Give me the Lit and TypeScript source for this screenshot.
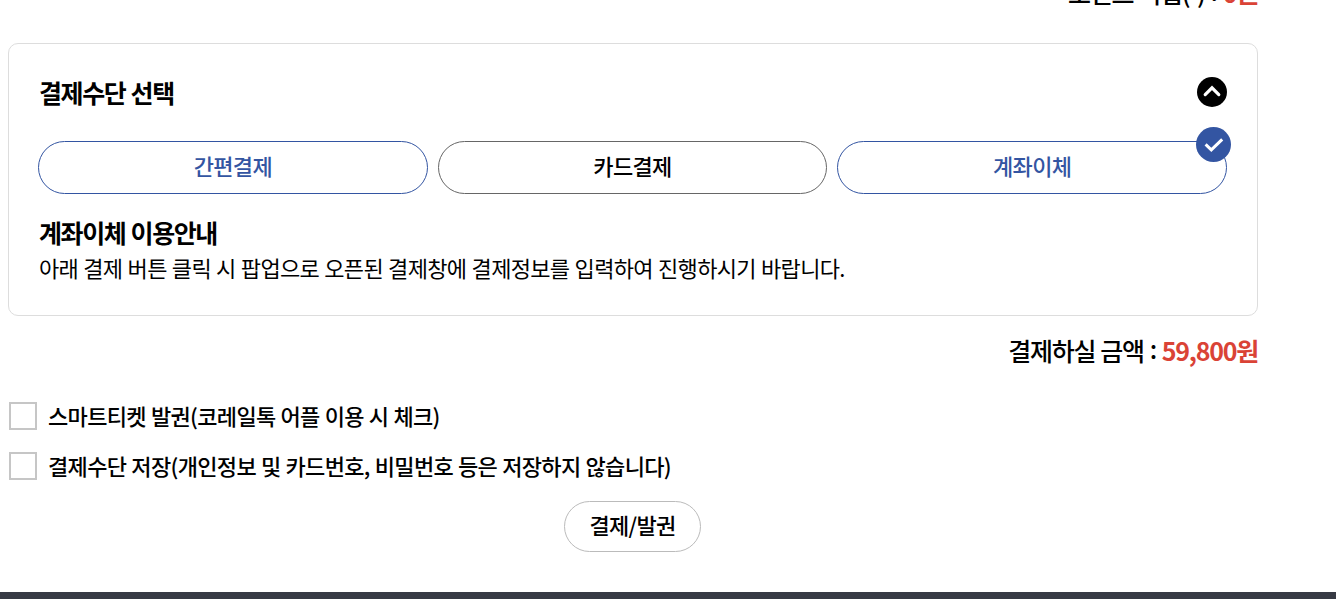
import { LitElement, css, html, svg, nothing } from 'lit'
import { customElement, property, state } from 'lit/decorators.js'

type Method = {
  id: string;
  name: string;
  tone: 'blue' | 'dark';
}

const methods: Method[] = [
  { id: 'easy', name: '간편결제', tone: 'blue' },
  { id: 'card', name: '카드결제', tone: 'dark' },
  { id: 'account', name: '계좌이체', tone: 'blue' },
]

@customElement('amount-line')
export class AmountLine extends LitElement {
  @property()
  public label = '';

  @property()
  public amount = '';

  render() {
    return html`<span>${this.label}</span><span class="colon">:</span><strong>${this.amount}</strong>`
  }

  static styles = css`
:host {
  display: flex;
  justify-content: flex-end;
  height: 36px;
  line-height: 36px;
  font-size: 25px;
  letter-spacing: -1.3px;
  font-weight: 500;
  white-space: pre;
}
.colon {
  margin: -2px 6px 2px 6px;
}
strong {
  font-weight: 700;
  letter-spacing: -1.25px;
  color: #da4336;
}
`
}

@customElement('check-row')
export class CheckRow extends LitElement {
  @property({ type: Boolean })
  public checked = false;

  render() {
    return html`
    <label>
      <input type="checkbox" .checked=${this.checked} @change=${() => { this.checked = !this.checked }}>
      <span><slot></slot></span>
    </label>
    `
  }

  static styles = css`
:host {
  display: block;
}
label {
  display: flex;
  align-items: center;
  gap: 11px;
  height: 32px;
  line-height: 32px;
  font-weight: 500;
  word-spacing: 0.7px;
  white-space: nowrap;
}
span {
  padding-bottom: 2px;
}
input {
  appearance: none;
  box-sizing: border-box;
  width: 28px;
  height: 28px;
  margin: 0;
  border: 2px solid #c6c6c6;
  background: #fff;
}
input:checked {
  background: #3355a2;
}
`
}

@customElement('app-root')
export default class PaymentPage extends LitElement {
  @state()
  private _selected = 'account';

  @state()
  private _open = true;

  private _renderMethod(method: Method) {
    return html`
      <button class="method ${method.tone}" @click=${() => { this._selected = method.id }}>
        ${method.name}
        ${method.id === this._selected ? html`
          <svg class="badge" viewBox="0 0 35 35">${svg`
            <circle cx="17.5" cy="17.5" r="17.5" fill="#3355a2"/>
            <path d="M9.6 17.4 L15.3 22.9 L26.2 12.3" fill="none" stroke="#fff" stroke-width="3"/>`}
          </svg>` : nothing}
      </button>
    `
  }

  render() {
    return html`
    <main>
      <amount-line class="points" label="포인트 적립(-)" amount="0원"></amount-line>
      <section>
        <header>
          <h2>결제수단 선택</h2>
          <button class="toggle" @click=${() => { this._open = !this._open }}>
            <svg width="30" height="30" viewBox="0 0 30 30">
              <circle cx="15" cy="15" r="15"/>
              <path d="M8.2 17.6 L15 10.8 L21.8 17.6" fill="none" stroke="#fff" stroke-width="3.2" stroke-linecap="round"/>
            </svg>
          </button>
        </header>
        ${this._open ? html`
          <div class="methods">${methods.map(method => this._renderMethod(method))}</div>
          <h3>계좌이체 이용안내</h3>
          <p>아래 결제 버튼 클릭 시 팝업으로 오픈된 결제창에 결제정보를 입력하여 진행하시기 바랍니다.</p>
        ` : nothing}
      </section>
      <amount-line class="total" label="결제하실 금액" amount="59,800원"></amount-line>
      <div class="checks">
        <check-row>스마트티켓 발권(코레일톡 어플 이용 시 체크)</check-row>
        <check-row>결제수단 저장(개인정보 및 카드번호, 비밀번호 등은 저장하지 않습니다)</check-row>
      </div>
      <button class="submit">결제/발권</button>
    </main>
    <footer></footer>
    `
  }

  static styles = css`
:host {
  display: flex;
  flex-direction: column;
  height: 599px;
  overflow: hidden;
  background: #fff;
  color: #000;
  font-family: "Noto Sans CJK KR", sans-serif;
  font-size: 22px;
  letter-spacing: -0.66px;
  word-spacing: 0.85px;
}
main {
  display: flex;
  flex-direction: column;
  width: 1250px;
  height: 592px;
  margin-left: 8px;
}
.points {
  margin-top: -26px;
}
section {
  box-sizing: border-box;
  height: 273px;
  margin-top: 33px;
  padding: 33px 30px 0 29px;
  border: 1px solid #ddd;
  border-radius: 10px;
}
header {
  display: flex;
  align-items: flex-start;
  justify-content: space-between;
  height: 32px;
}
h2, h3 {
  margin: 0 0 0 1px;
  font-size: 25px;
  font-weight: 700;
  letter-spacing: -1.4px;
  line-height: 34px;
}
h2 {
  line-height: 30px;
}
p {
  margin: 0 0 0 1px;
  line-height: 36px;
  white-space: nowrap;
}
button {
  padding: 0;
  background: #fff;
  font: inherit;
  font-weight: 500;
  letter-spacing: inherit;
  word-spacing: inherit;
  color: #000;
  cursor: pointer;
}
.toggle {
  height: 30px;
  border: 0;
}
.toggle svg {
  display: block;
}
.methods {
  display: grid;
  grid-template-columns: repeat(3, 1fr);
  gap: 10px;
  margin: 32px 0 21px;
}
.method {
  position: relative;
  height: 53px;
  padding-bottom: 5px;
  border: 1px solid #666;
  border-radius: 27px;
}
.blue {
  border-color: #3355a2;
  color: #3355a2;
}
.badge {
  position: absolute;
  top: -15px;
  right: -5px;
  width: 35px;
  height: 35px;
}
.total {
  margin-top: 16px;
}
.checks {
  display: flex;
  flex-direction: column;
  gap: 18px;
  margin: 32px 0 0 1px;
}
.submit {
  align-self: center;
  width: 137px;
  height: 51px;
  margin: 19px 1px 0 0;
  padding-bottom: 5px;
  border: 1px solid #bbb;
  border-radius: 26px;
}
footer {
  height: 7px;
  background: #373a44;
}
`
}

declare global {
  interface HTMLElementTagNameMap {
    'app-root': PaymentPage
    'amount-line': AmountLine
    'check-row': CheckRow
  }
}
